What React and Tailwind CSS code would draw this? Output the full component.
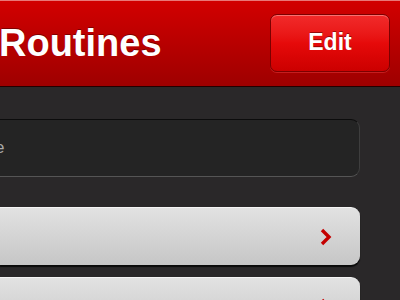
import React from "react";

const Chevron = () => (
  <svg width="14" height="18" viewBox="0 0 14 18" className="block">
    <polyline
      points="3,2 10,9 3,16"
      fill="none"
      stroke="#c40000"
      strokeWidth="3.4"
      strokeLinejoin="miter"
    />
  </svg>
);

const Row = () => (
  <div className="h-[58px] w-[360px] rounded-r-[9px] border-t border-t-[#f4f4f4] bg-gradient-to-b from-[#e2e2e2] to-[#c6c6c6] shadow-[0_2px_1px_#0a0a0a] flex items-center justify-end pr-[27px] shrink-0">
    <Chevron />
  </div>
);

export default function App() {
  return (
    <div className="w-[400px] h-[300px] overflow-hidden bg-[#2a2829] font-['Liberation_Sans',Arial,sans-serif]">
      <div className="h-[87px] border-t border-t-[#e87878] border-b border-b-[#240000] bg-gradient-to-b from-[#d20000] to-[#9e0000] flex items-center justify-between pr-[10px]">
        <h1 className="text-white font-bold text-[38px] leading-none -ml-[1px] mt-[-2px] [text-shadow:0_-1px_0_rgba(80,0,0,0.6)]">
          Routines
        </h1>
        <button className="w-[120px] h-[58px] rounded-[7px] border border-[#7c0000] bg-gradient-to-b from-[#f22a2a] via-[#e60a0a] to-[#cc0000] shadow-[inset_0_1px_0_rgba(255,160,160,0.6),0_1px_0_rgba(255,90,90,0.35)] text-white font-bold text-[23px] mt-[-2px] [text-shadow:0_-1px_0_rgba(90,0,0,0.6)]">
          Edit
        </button>
      </div>
      <div className="pt-[32px] flex flex-col">
        <div className="ml-[-56px] w-[416px] h-[58px] rounded-r-[9px] bg-[#242424] border border-[#3e3e3e] border-t-[#0c0c0c] border-b-[#555555] flex items-center pl-[14px]">
          <span className="text-[#a8a8a8] text-[17px]">Name</span>
        </div>
        <div className="mt-[30px] flex flex-col gap-[12px]">
          <Row />
          <Row />
        </div>
      </div>
    </div>
  );
}
